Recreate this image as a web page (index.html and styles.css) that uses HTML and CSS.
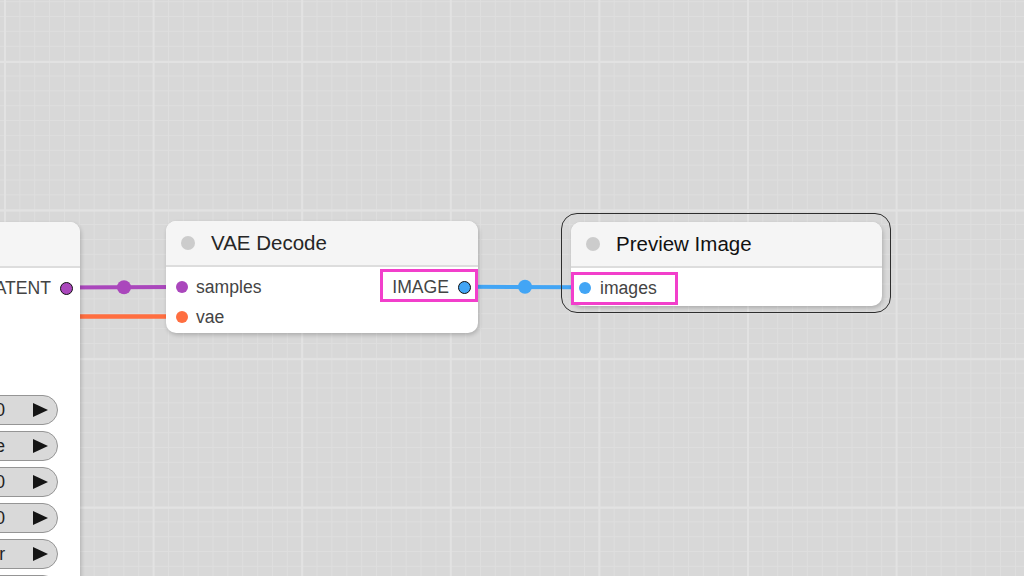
FILE: index.html
```html
<!DOCTYPE html>
<html>
<head>
<meta charset="utf-8">
<link rel="stylesheet" href="styles.css">
</head>
<body>
<div class="canvas">
  <svg class="links" width="1024" height="576" viewBox="0 0 1024 576">
    <line x1="0" y1="316.5" x2="176" y2="316.5" stroke="#ff6e40" stroke-width="4.5"/>
    <line x1="60" y1="287.6" x2="176" y2="287" stroke="#aa47bc" stroke-width="4"/>
    <circle cx="124" cy="287.3" r="7" fill="#aa47bc"/>
    <line x1="470" y1="286.7" x2="580" y2="287.3" stroke="#42a5f5" stroke-width="4"/>
    <circle cx="525" cy="286.8" r="7" fill="#42a5f5"/>
  </svg>

  <div class="node ksampler">
    <div class="title"><span class="tdot"></span><span class="ttext">KSampler</span></div>
    <div class="body">
      <div class="row"><div class="in"><i class="sd purple"></i>model</div><div class="out">LATENT<i class="sd od purple"></i></div></div>
      <div class="row"><div class="in"><i class="sd"></i>positive</div></div>
      <div class="row"><div class="in"><i class="sd"></i>negative</div></div>
      <div class="row"><div class="in"><i class="sd"></i>latent_image</div></div>
      <div class="widgets">
        <div class="pill"><span class="tri left"></span><span class="wl">seed</span><span class="wv">156680208700</span><span class="tri"></span></div>
        <div class="pill"><span class="tri left"></span><span class="wl">control</span><span class="wv">randomize</span><span class="tri"></span></div>
        <div class="pill"><span class="tri left"></span><span class="wl">steps</span><span class="wv">20</span><span class="tri"></span></div>
        <div class="pill"><span class="tri left"></span><span class="wl">cfg</span><span class="wv">8.0</span><span class="tri"></span></div>
        <div class="pill"><span class="tri left"></span><span class="wl">sampler_name</span><span class="wv">euler</span><span class="tri"></span></div>
        <div class="pill"><span class="tri left"></span><span class="wl">scheduler</span><span class="wv">normal</span><span class="tri"></span></div>
        <div class="pill"><span class="tri left"></span><span class="wl">denoise</span><span class="wv">1.00</span><span class="tri"></span></div>
      </div>
    </div>
  </div>

  <div class="node vae">
    <div class="title"><span class="tdot"></span><span class="ttext">VAE Decode</span></div>
    <div class="body">
      <div class="row"><div class="in"><i class="sd purple"></i>samples</div><div class="out hl">IMAGE<i class="sd od blue"></i></div></div>
      <div class="row"><div class="in"><i class="sd orange"></i>vae</div></div>
    </div>
  </div>

  <div class="node preview selected">
    <div class="title"><span class="tdot"></span><span class="ttext dark">Preview Image</span></div>
    <div class="body">
      <div class="row"><div class="in hl"><i class="sd blue"></i>images</div></div>
    </div>
  </div>
</div>
</body>
</html>
```

FILE: styles.css
```css
html, body {
  margin: 0;
  padding: 0;
}

body {
  font-family: "Liberation Sans", Arial, sans-serif;
}

.canvas {
  position: relative;
  width: 1024px;
  height: 576px;
  overflow: hidden;
  background-color: #d8d8d8;
  background-image:
    linear-gradient(to right, #e2e2e2 2px, transparent 2px),
    linear-gradient(to bottom, #e2e2e2 2px, transparent 2px),
    linear-gradient(to right, #dedede 1px, transparent 1px),
    linear-gradient(to bottom, #dedede 1px, transparent 1px);
  background-size:
    148.6px 100%,
    100% 148.6px,
    14.86px 100%,
    100% 14.86px;
  background-position:
    4px 0,
    0 61px,
    4.5px 0,
    0 1.2px;
}

.links {
  position: absolute;
  left: 0;
  top: 0;
}

.node {
  position: absolute;
  background: #ffffff;
  border-radius: 10px;
  box-shadow: 1px 2px 4px rgba(0, 0, 0, 0.2);
}

.ksampler {
  left: -240px;
  top: 222px;
  width: 320px;
}

.vae {
  left: 166px;
  top: 221px;
  width: 312px;
}

.preview {
  left: 571px;
  top: 222px;
  width: 311px;
}

.selected::before {
  content: "";
  position: absolute;
  left: -10px;
  top: -9px;
  right: -9px;
  bottom: -7px;
  border: 1.5px solid #2e2e2e;
  border-radius: 16px;
  pointer-events: none;
}

.title {
  height: 44px;
  display: flex;
  align-items: center;
  background: #f5f5f5;
  border-radius: 10px 10px 0 0;
  border-bottom: 2px solid #dddddd;
}

.tdot {
  width: 14px;
  height: 14px;
  border-radius: 50%;
  background: #cccccc;
  margin-left: 15px;
  margin-right: 16px;
  flex: none;
}

.ttext {
  font-size: 20.5px;
  color: #262626;
  white-space: nowrap;
}

.ttext.dark {
  color: #111111;
}

.body {
  padding: 5px 0 1px;
  border-radius: 0 0 10px 10px;
}

.preview .body {
  padding-bottom: 3px;
}

.row {
  height: 30px;
  display: flex;
  align-items: center;
  justify-content: space-between;
  font-size: 17.6px;
  color: #444444;
}

.in {
  display: flex;
  align-items: center;
  white-space: nowrap;
}

.in .sd {
  margin-left: 10px;
  margin-right: 8px;
}

.in.hl {
  box-sizing: border-box;
  height: 33px;
  width: 107px;
  border: 3px solid #f23fcb;
}

.in.hl .sd {
  margin-left: 5px;
  margin-right: 9px;
}

.out {
  display: flex;
  align-items: center;
  margin-left: auto;
  white-space: nowrap;
}

.out .sd {
  margin-left: 9px;
  margin-right: 7px;
}

.out.hl {
  box-sizing: border-box;
  height: 33px;
  border: 3px solid #f23fcb;
  padding-left: 9px;
  padding-top: 3px;
  margin-bottom: 3px;
}

.out.hl .sd {
  margin-right: 4px;
}

.sd {
  display: block;
  width: 12px;
  height: 12px;
  border-radius: 50%;
  background: #999999;
  flex: none;
}

.sd.od {
  box-sizing: border-box;
  width: 13px;
  height: 13px;
  border: 1.5px solid #111111;
}

.purple { background: #aa47bc; }
.orange { background: #ff6e40; }
.blue { background: #42a5f5; }

.widgets {
  padding-top: 2px;
}

.pill {
  height: 30px;
  box-sizing: border-box;
  margin: 0 22px 6px 22px;
  border: 1px solid #959595;
  border-radius: 15px;
  background: #d9d9d9;
  display: flex;
  align-items: center;
  padding: 0 9px;
  font-size: 17.6px;
  color: #222222;
  white-space: nowrap;
  overflow: hidden;
}

.wl {
  margin-left: 10px;
  color: #666666;
  flex: 1 1 auto;
  min-width: 0;
  overflow: hidden;
}

.wv {
  margin-left: 8px;
  margin-right: 28px;
  flex: none;
}

.tri {
  width: 0;
  height: 0;
  border-top: 7px solid transparent;
  border-bottom: 7px solid transparent;
  border-left: 15px solid #151515;
  flex: none;
}

.tri.left {
  border-left: none;
  border-right: 15px solid #151515;
}
```
